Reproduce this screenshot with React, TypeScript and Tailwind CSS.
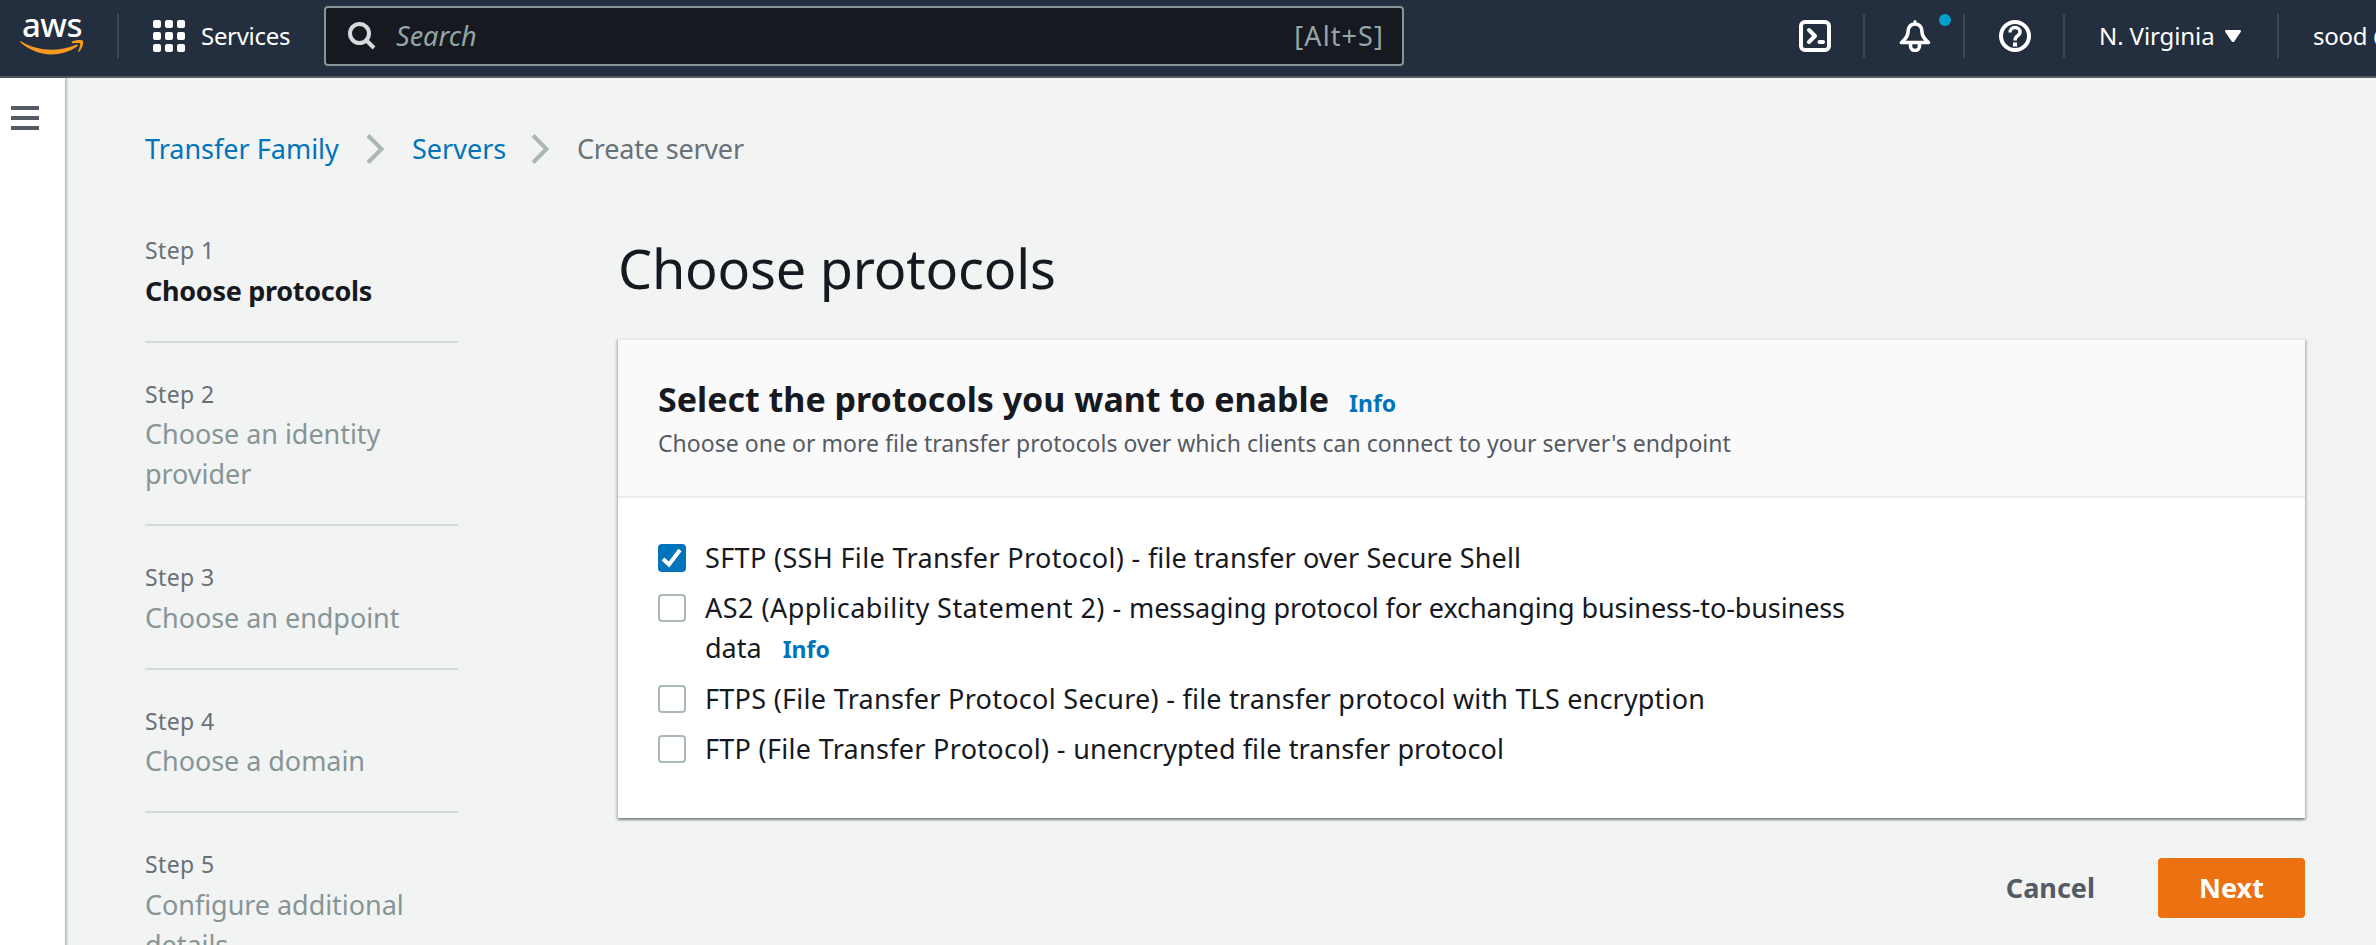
import type { ReactNode } from "react";

type Step = { label: string; lines: string[]; active?: boolean };

const steps: Step[] = [
  { label: "Step 1", lines: ["Choose protocols"], active: true },
  { label: "Step 2", lines: ["Choose an identity", "provider"] },
  { label: "Step 3", lines: ["Choose an endpoint"] },
  { label: "Step 4", lines: ["Choose a domain"] },
  { label: "Step 5", lines: ["Configure additional", "details"] },
];

function AwsLogo() {
  return (
    <div className="flex h-[40px] w-[64px] flex-col items-center">
      <span className="h-[24px] text-[33px] leading-[18px] font-medium tracking-[-0.5px] text-white">aws</span>
      <svg className="h-[15px] w-[64px] shrink-0" viewBox="0 0 64 15" fill="#f7981f">
        <path d="M1 1.2c9 5.6 19.800 8.500 30.500 8.500 8 0 16.500-1.700 24.500-5 1.300-.5 2.300.8 1.100 1.700C50 11.700 40 14.400 31.300 14.400 19.500 14.400 8.500 9.800.4 2.300-.2 1.600.2.800 1 1.200z" />
        <path d="M52 1.500c3.600-1.900 9.800-1.900 10.900-.7 1 1.300-.3 7.900-3.900 11-.6.500-1.200.2-.9-.4.900-2.200 2.700-6.700 1.800-7.800-.8-1.100-5.200-.6-7.200-.4-.7.100-1.400-1.200-.7-1.700z" />
      </svg>
    </div>
  );
}

function AppsGrid() {
  return (
    <div className="grid grid-cols-3 gap-[4px]">
      {Array.from({ length: 9 }, (_, i) => (
        <span key={i} className="size-[8px] rounded-[2px] bg-white" />
      ))}
    </div>
  );
}

function Divider() {
  return <div className="h-[44px] w-[2px] shrink-0 bg-[#414750]" />;
}

function Chevron() {
  return (
    <svg className="h-[30px] w-[19px] shrink-0" viewBox="0 0 19 30" fill="none" stroke="#aab7b8" strokeWidth="4">
      <path d="M2 1.500L15.500 15 2 28.500" />
    </svg>
  );
}

function Header() {
  return (
    <header className="flex h-[78px] items-start overflow-hidden border-b-2 border-[#545b64] bg-[#232f3e] text-white">
      <div className="flex h-[72px] shrink-0 items-center pl-[20px]">
        <AwsLogo />
        <div className="w-[33px]" />
        <Divider />
        <div className="w-[34px]" />
        <AppsGrid />
        <span className="w-[139px] pl-[16px] text-[24px] leading-[32px] tracking-[-0.3px]">Services</span>
        <div className="flex h-[60px] w-[1080px] items-center rounded-[4px] border-2 border-[#879596] bg-[#16191f] pr-[18px] pl-[20px] text-[#95a5a6]">
          <svg className="size-[32px]" viewBox="0 0 32 32" fill="none" stroke="#d5dbdb" strokeWidth="4">
            <circle cx="13.500" cy="13.500" r="9.500" />
            <path d="M20 20l8 8" />
          </svg>
          <span className="pl-[18px] text-[27px] leading-[40px] italic">Search</span>
          <span className="ml-auto text-[27px] leading-[40px] tracking-[1.1px]">[Alt+S]</span>
        </div>
      </div>
      <div className="ml-auto flex h-[72px] w-[577px] shrink-0 items-center overflow-hidden">
        <svg className="size-[32px] shrink-0" viewBox="0 0 32 32" fill="none" stroke="#fff" strokeWidth="4" strokeLinecap="round" strokeLinejoin="round">
          <rect x="2" y="2" width="28" height="28" rx="4" />
          <path d="M10 10l6 6-6 6" />
          <path d="M20.500 22h3.500" />
        </svg>
        <div className="w-[32px] shrink-0" />
        <Divider />
        <div className="relative mr-[32px] ml-[34px] size-[32px] shrink-0">
          <svg className="size-[32px]" viewBox="0 0 32 32" fill="none" stroke="#fff" strokeWidth="3.600" strokeLinejoin="round" strokeLinecap="round">
            <path d="M16 1.500v1" strokeWidth="3" />
            <path d="M16 4c-4.800 0-7 3.600-7 8 0 4.500-3 7.500-6.500 10.500h27C26 19.500 23 16.500 23 12c0-4.400-2.200-8-7-8z" />
            <path d="M11.500 24v2a4.500 4.500 0 0 0 9 0v-2" />
          </svg>
          <span className="absolute top-[-6px] left-[40px] size-[12px] rounded-full bg-[#00a1c9]" />
        </div>
        <Divider />
        <svg className="mr-[32px] ml-[34px] size-[32px] shrink-0" viewBox="0 0 32 32" fill="none" stroke="#fff" strokeWidth="4">
          <circle cx="16" cy="16" r="14" />
          <path d="M11 12.500c0-3 2-5 5-5s5 1.800 5 4.500c0 2-1.200 3-2.800 4.100-1.500 1-2.200 1.900-2.200 4.400" strokeWidth="3.400" />
          <path d="M14 22.500h4v4h-4z" fill="#fff" stroke="none" />
        </svg>
        <Divider />
        <span className="w-[160px] shrink-0 pl-[34px] text-[24px] leading-[32px] tracking-[-0.1px] whitespace-nowrap">N. Virginia</span>
        <svg className="h-[12px] w-[16px] shrink-0" viewBox="0 0 16 12" fill="#fff">
          <path d="M1.500 0h13c1.200 0 1.800 1 1.200 2L9.200 11.400c-.6.8-1.800.8-2.400 0L.3 2C-.3 1 .3 0 1.500 0z" />
        </svg>
        <div className="w-[36px] shrink-0" />
        <Divider />
        <span className="pl-[34px] text-[24px] leading-[32px] tracking-[-0.3px] whitespace-nowrap">sood @</span>
      </div>
    </header>
  );
}

function Option({ checked, children }: { checked?: boolean; children: ReactNode }) {
  return (
    <label className="flex items-start gap-[19px]">
      {checked ? (
        <span className="mt-[6px] flex size-[28px] shrink-0 items-center justify-center rounded-[4px] bg-[#0073bb]">
          <svg className="size-[28px]" viewBox="0 0 28 28" fill="none" stroke="#fff" strokeWidth="4">
            <path d="M5 15l6 5.500L22 6" />
          </svg>
        </span>
      ) : (
        <span className="mt-[6px] size-[28px] shrink-0 rounded-[4px] border-2 border-[#aab7b8] bg-white" />
      )}
      <span className="whitespace-nowrap">{children}</span>
    </label>
  );
}

export default function App() {
  return (
    <div className="flex h-[945px] w-full flex-col overflow-hidden bg-[#f2f3f3] font-['Noto_Sans','Open_Sans',sans-serif] text-[27px] leading-[40px] text-[#16191f]">
      <Header />
      <div className="flex min-h-0 flex-1">
        <aside className="w-[65px] shrink-0 bg-white pt-[28px] pl-[11px] shadow-[1px_1px_2px_1px_rgba(0,28,36,0.25)]">
          <div className="flex w-[28px] flex-col gap-[6px]">
            <span className="h-[4px] bg-[#545b64]" />
            <span className="h-[4px] bg-[#545b64]" />
            <span className="h-[4px] bg-[#545b64]" />
          </div>
        </aside>
        <main className="flex min-w-0 flex-1 flex-col pt-[51px] pr-[71px] pl-[80px]">
          <nav className="flex h-[39px] shrink-0 items-center text-[#687078]">
            <a className="w-[221px] text-[#0073bb]">Transfer Family</a>
            <Chevron />
            <a className="w-[146px] pl-[27px] text-[#0073bb]">Servers</a>
            <Chevron />
            <span className="pl-[27px] tracking-[-0.200px]">Create server</span>
          </nav>
          <div className="flex">
            <ol className="w-[313px] shrink-0 pt-[31px]">
              {steps.map((step) => (
                <li key={step.label} className="border-b-2 border-[#d5dbdb] pt-[31px] pb-[30px]">
                  <div className="h-[40.500px] text-[23px] tracking-[0.400px] text-[#687078]">{step.label}</div>
                  {step.lines.map((line) => (
                    <div key={line} className={step.active ? "font-bold tracking-[-0.300px]" : "tracking-[-0.05px] text-[#879596]"}>
                      {line}
                    </div>
                  ))}
                </li>
              ))}
            </ol>
            <section className="ml-[160px] w-[1687px] pt-[64px]">
              <h1 className="h-[106px] text-[54px] leading-[72px] tracking-[-0.200px]">Choose protocols</h1>
              <div className="border-t-2 border-[#eaeded] bg-white shadow-[0_2px_2px_0_rgba(0,28,36,0.3),2px_2px_2px_0_rgba(0,28,36,0.15),-2px_2px_2px_0_rgba(0,28,36,0.15)]">
                <div className="h-[158px] border-b-2 border-[#eaeded] bg-[#fafafa] px-[40px] pt-[37px]">
                  <div className="flex h-[44px] items-baseline leading-[44px]">
                    <h2 className="text-[34px] font-bold">Select the protocols you want to enable</h2>
                    <a className="pl-[20px] text-[23px] font-bold text-[#0073bb]">Info</a>
                  </div>
                  <p className="mt-[4px] text-[23px] leading-[36px] tracking-[0.030px] text-[#545b64]">
                    Choose one or more file transfer protocols over which clients can connect to your server's endpoint
                  </p>
                </div>
                <div className="flex h-[320px] flex-col gap-[10px] px-[40px] pt-[40px]">
                  <Option checked>
                    <span className="tracking-[0.350px]">SFTP (SSH File Transfer Protocol) - </span>
                    <span className="tracking-[0.120px]">file transfer over Secure Shell</span>
                  </Option>
                  <Option>
                    <span className="tracking-[0.470px]">AS2 (Applicability Statement 2) - </span>
                    <span className="tracking-[-0.100px]">messaging protocol for exchanging business-to-business</span>
                    <br />
                    data
                    <a className="ml-[21px] text-[23px] font-bold text-[#0073bb]">Info</a>
                  </Option>
                  <Option>
                    <span className="tracking-[0.290px]">FTPS (File Transfer Protocol Secure) - </span>
                    <span className="tracking-[0.180px]">file transfer protocol with TLS encryption</span>
                  </Option>
                  <Option>
                    <span className="tracking-[0.300px]">FTP (File Transfer Protocol) - </span>
                    <span className="tracking-[0.100px]">unencrypted file transfer protocol</span>
                  </Option>
                </div>
              </div>
              <div className="flex items-center justify-end pt-[40px] font-bold">
                <button className="pr-[63px] text-[#545b64]">Cancel</button>
                <button className="h-[60px] w-[147px] rounded-[4px] bg-[#ec7211] text-white">Next</button>
              </div>
            </section>
          </div>
        </main>
      </div>
    </div>
  );
}
